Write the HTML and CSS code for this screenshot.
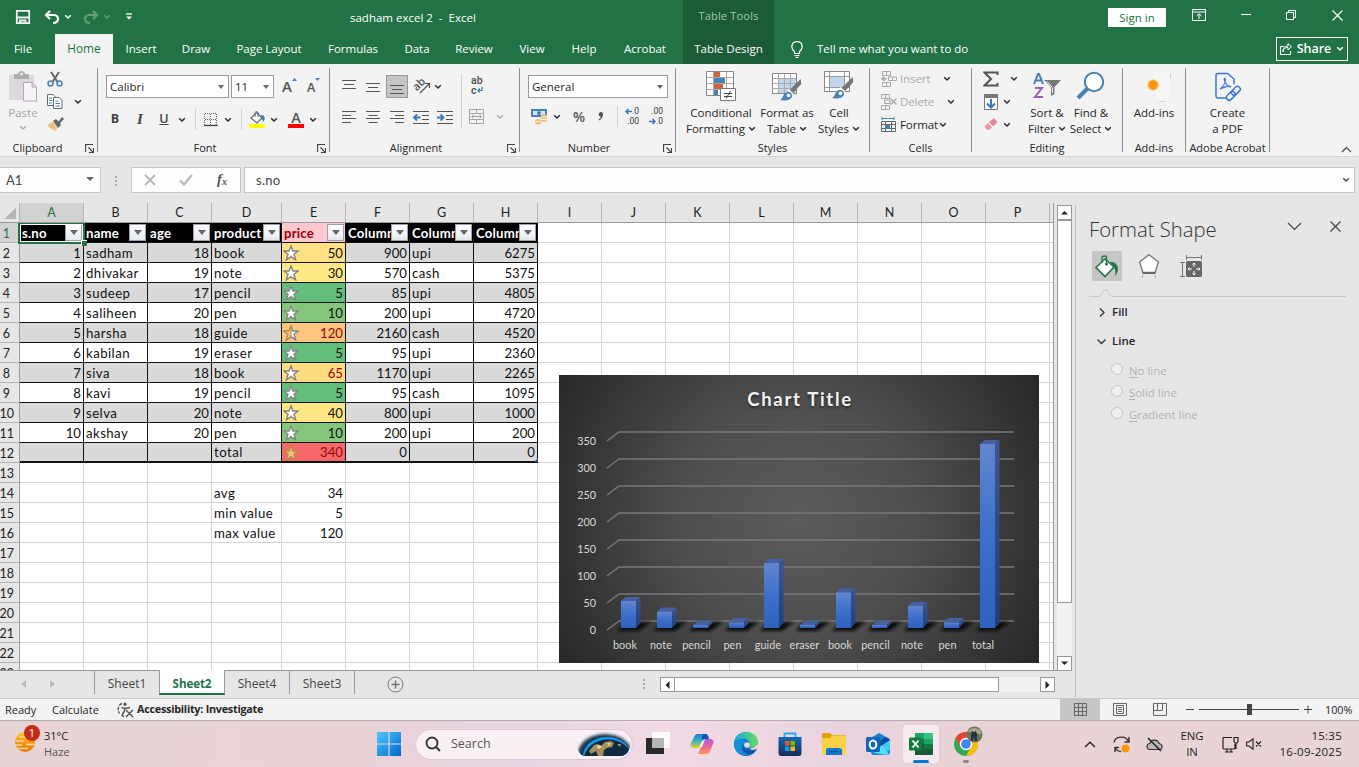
FILE: index.html
```html
<!DOCTYPE html>
<html lang="en">
<head>
<meta charset="utf-8">
<title>sadham excel 2 - Excel</title>
<link rel="stylesheet" href="styles.css">
</head>
<body>
<svg class="defs" width="0" height="0">
  <symbol id="chev" viewBox="0 0 8 6"><path d="M1.200 1.300 4 4 6.800 1.300" fill="none" stroke="currentColor" stroke-width="1.400"/></symbol>
  <symbol id="launch" viewBox="0 0 9 9"><path d="M.5 8V.5H8M3.500 3.500 8 8M8.500 4V8.500H4" fill="none" stroke="#444" stroke-width="1.200"/></symbol>
  <symbol id="star" viewBox="0 0 16 16"><path d="M8 .9 9.900 6H15.200L11 9.300 12.700 15 8 11.600 3.300 15 5 9.300.8 6H6.100Z" fill="#fff" stroke="#858585" stroke-width="1.400"/></symbol>
  <symbol id="halfstar" viewBox="0 0 16 16"><path d="M8 .9 9.900 6H15.200L11 9.300 12.700 15 8 11.600 3.300 15 5 9.300.8 6H6.100Z" fill="#fff" stroke="#858585" stroke-width="1.400"/><path d="M8 .9V11.600L3.300 15 5 9.300.8 6H6.100Z" fill="#eac282" stroke="#b98a3c"/></symbol>
  <symbol id="fullstar" viewBox="0 0 16 16"><path d="M8 .9 9.900 6H15.200L11 9.300 12.700 15 8 11.600 3.300 15 5 9.300.8 6H6.100Z" fill="#eac282" stroke="#b98a3c" stroke-width="1.400"/></symbol>
  <symbol id="brush" viewBox="0 0 24 24"><path d="M23 0 24 5 15 15 11 12Z" fill="#777"/><path d="M10 11 15 15.500" stroke="#fff" stroke-width="1.500"/><path d="M1 22C5 21 4 16 8 14 11 12.500 15 15 14 18.500 12.500 22.500 6 23 1 22Z" fill="#4682b8"/><circle cx="10.500" cy="17" r="2" fill="#fff"/></symbol>
</svg>

<header class="titlebar">
  <div class="title-left">
    <div class="quick">
      <svg width="16" height="16" viewBox="0 0 16 16" fill="none" stroke="#f3f3f3" stroke-width="1.800"><path d="M1.800 1.800H14.200V14.200H1.800ZM2 8.500H14M5 14V11.500H10.500V14"/></svg>
      <svg width="16" height="15" viewBox="0 0 16 15" fill="none" stroke="#fff" stroke-width="2.200"><path d="M6 1 2 5 6 9M2 5H10C15.500 5 15.500 13 9 13"/></svg>
      <svg width="8" height="6"><use href="#chev"/></svg>
      <svg class="faded" width="16" height="15" viewBox="0 0 16 15" fill="none" stroke="#fff" stroke-width="2.200"><path d="M10 1 14 5 10 9M14 5H6C.5 5 .5 13 7 13"/></svg>
      <svg class="faded" width="8" height="6"><use href="#chev"/></svg>
      <svg width="8" height="8" viewBox="0 0 8 8"><path d="M1 1H7" stroke="#fff" stroke-width="1.300"/><path d="M1 3.500H7L4 6.500Z" fill="#fff"/></svg>
    </div>
    <div class="doc-title">sadham excel 2&nbsp; -&nbsp; Excel</div>
  </div>
  <div class="tool-tab"><span class="tool-kind">Table Tools</span><span>Table Design</span></div>
  <div class="title-right">
    <span class="signin">Sign in</span>
    <svg width="14" height="12" viewBox="0 0 14 12" fill="none" stroke="#fff"><path d="M.5.5H13.500V11.500H.5ZM.5 3H13.500M7 10V5M4.500 7 7 4.700 9.500 7"/></svg>
    <svg width="10" height="10" viewBox="0 0 10 10"><path d="M0 4.500H10" stroke="#fff" stroke-width="1.100"/></svg>
    <svg width="10" height="10" viewBox="0 0 10 10" fill="none" stroke="#fff"><path d="M.5 2.500H7.500V9.500H.5ZM2.500 2.500V.5H9.500V7.500H7.500"/></svg>
    <svg width="11" height="11" viewBox="0 0 11 11"><path d="M.5.5 10.500 10.500M10.500.5.5 10.500" stroke="#fff" stroke-width="1.100"/></svg>
  </div>
  <nav class="tabs"><span>File</span><span class="active">Home</span><span>Insert</span><span>Draw</span><span>Page Layout</span><span>Formulas</span><span>Data</span><span>Review</span><span>View</span><span>Help</span><span>Acrobat</span></nav>
  <div class="tell">
    <svg width="12" height="17" viewBox="0 0 12 17" fill="none" stroke="#fff" stroke-width="1.200"><path d="M3.500 12.500V10.500C-1 7 .5.7 6 .7S13 7 8.500 10.500V12.500ZM3.500 14.500H8.500M4.500 16.400H7.500"/></svg>
    <span class="tell-text">Tell me what you want to do</span>
    <span class="share"><svg width="12" height="12" viewBox="0 0 12 12" fill="none" stroke="#fff"><path d="M4 3.500H.5V11.500H10.500V8M3 9C3 5.500 5 4.500 8 4.500V7L11.500 3.700 8 .7V3C4.500 3 3 5 3 9Z"/></svg>Share<svg width="8" height="6"><use href="#chev"/></svg></span>
  </div>
</header>

<section class="ribbon">
  <div class="group g-clip">
    <div class="body">
      <div class="big muted"><svg width="29" height="31" viewBox="0 0 29 31"><path d="M0 4H25V29H0Z" fill="#ddd8dc"/><path d="M5 3H9C9-1 16-1 16 3H20V8H5Z" fill="#b0adb0"/><circle cx="12.500" cy="3" r="1.300" fill="#f3f3f3"/><path d="M14.500 11.500H23L27.500 16V30H14.500ZM23 11.500V16H27.500" fill="#f8f3f8" stroke="#b0a8b2"/></svg><span>Paste</span><svg width="8" height="6"><use href="#chev"/></svg></div>
      <div class="clip-tools">
        <svg width="16" height="16" viewBox="0 0 16 16" fill="none"><path d="M4 1 10.500 11M12 1 5.500 11" stroke="#666" stroke-width="2"/><circle cx="3.500" cy="12.500" r="2.500" stroke="#4682b8" stroke-width="1.500"/><circle cx="12.500" cy="12.500" r="2.500" stroke="#4682b8" stroke-width="1.500"/></svg><i></i>
        <svg width="16" height="15" viewBox="0 0 16 15"><path d="M.5.5H6L8 2.500V11.500H.5Z" fill="#fff" stroke="#666"/><path d="M6.500 3.500H12L15 6.500V14.500H6.500Z" fill="#fff" stroke="#666"/><path d="M2 4H5M2 6.500H5M2 9H5M8.500 7H11M8.500 9.500H13M8.500 12H13" stroke="#4682b8"/></svg><svg width="8" height="6"><use href="#chev"/></svg>
        <svg width="17" height="15" viewBox="0 0 17 15"><path d="M0 8 6 5 10 11 9 14C5 13 3 11 0 8Z" fill="#ecc07c"/><path d="M6 4 9 2 11.500 4.500 15 0 17 2 13 6 14 8 11 11Z" fill="#666"/></svg>
      </div>
    </div>
    <div class="label">Clipboard<svg width="9" height="9"><use href="#launch"/></svg></div>
  </div>

  <div class="group g-font">
    <div class="body stack">
      <div class="combos"><span class="combo c-font">Calibri<b class="tri"></b></span><span class="combo c-size">11<b class="tri"></b></span>
        <span class="grow-a">A<svg width="5" height="3"><path d="M0 3 2.500 0 5 3Z" fill="#4682b8"/></svg></span><span class="shrink-a">A<svg width="5" height="3"><path d="M0 0 2.500 3 5 0Z" fill="#4682b8"/></svg></span></div>
      <div class="font-tools">
        <b class="fmt">B</b><em class="fmt it">I</em><b class="fmt un">U</b><svg width="8" height="6"><use href="#chev"/></svg><i class="vr"></i>
        <svg width="14" height="14" viewBox="0 0 14 14"><path d="M.5 1V12M6.500 1V12M12.500 1V12M1 .5H13M1 6.500H13" stroke="#666" stroke-dasharray="1 1"/><path d="M0 12.500H13.500" stroke="#444" stroke-width="1.300"/></svg><svg width="8" height="6"><use href="#chev"/></svg><i class="vr"></i>
        <svg width="17" height="17" viewBox="0 0 17 17"><path d="M2 7 8 1.500 13 7 8 12Z" fill="#fff" stroke="#666" stroke-width="1.200"/><path d="M6 6V2C6 0 9 0 9 2V6" fill="none" stroke="#666"/><path d="M12 4C16 4 16.500 7 14.500 11L12.500 8Z" fill="#4682b8"/><path d="M0 13H16V17H0Z" fill="#ff0"/></svg><svg width="8" height="6"><use href="#chev"/></svg>
        <span class="acolor">A</span><svg width="8" height="6"><use href="#chev"/></svg>
      </div>
    </div>
    <div class="label">Font<svg width="9" height="9"><use href="#launch"/></svg></div>
  </div>

  <div class="group g-align">
    <div class="body">
      <div class="align-left">
        <div class="row5 top">
          <svg width="14" height="14" viewBox="0 0 14 14"><path d="M0 .5H14M2 4.500H12M0 8.500H14" stroke="#555"/></svg>
          <svg width="14" height="14" viewBox="0 0 14 14"><path d="M0 3.500H14M2 7.500H12M0 11.500H14" stroke="#555"/></svg>
          <span class="pressed"><svg width="14" height="14" viewBox="0 0 14 14"><path d="M0 5.500H14M2 9.500H12M0 13.500H14" stroke="#555"/></svg></span>
          <span class="orient"><span>ab</span><svg width="12" height="12" viewBox="0 0 12 12"><path d="M1 11 10.500 1.500M6 1.500H10.500V6" fill="none" stroke="#555" stroke-width="1.200"/></svg></span>
          <svg width="8" height="6"><use href="#chev"/></svg>
        </div>
        <div class="row5">
          <svg width="14" height="12"><path d="M0 .5H14M0 4.500H9M0 7.500H14M0 11.500H9" stroke="#555"/></svg>
          <svg width="14" height="12"><path d="M0 .5H14M2.500 4.500H11.500M0 7.500H14M2.500 11.500H11.500" stroke="#555"/></svg>
          <svg width="14" height="12"><path d="M0 .5H14M5 4.500H14M0 7.500H14M5 11.500H14" stroke="#555"/></svg>
          <svg width="16" height="13" viewBox="0 0 16 13"><path d="M0 .5H16M9 4.500H16M9 8.500H16M0 12.500H16" stroke="#555"/><path d="M7.500 6.500H1M4 3.500 1 6.500 4 9.500" fill="none" stroke="#3a78b5" stroke-width="1.800"/></svg>
          <svg width="16" height="13" viewBox="0 0 16 13"><path d="M0 .5H16M9 4.500H16M9 8.500H16M0 12.500H16" stroke="#555"/><path d="M0 6.500H6.500M3.500 3.500 6.500 6.500 3.500 9.500" fill="none" stroke="#3a78b5" stroke-width="1.800"/></svg>
        </div>
      </div>
      <i class="vr tall"></i>
      <div class="wrapcol">
        <span class="wraptext"><span>ab</span><span>c<svg width="6" height="6" viewBox="0 0 6 6"><path d="M5 0V3.500H1M2.800 1.500 1 3.500 2.800 5.500" fill="none" stroke="#3a78b5" stroke-width="1.200"/></svg></span></span>
        <span class="merge"><svg width="15" height="15" viewBox="0 0 15 15" fill="none" stroke="#a5a5a5"><path d="M.5.5H14.500V14.500H.5ZM.5 4.500H14.500M.5 10.500H14.500M7.500.5V4M7.500 11V14.500M2.500 7.500H12.500M4.500 5.500 2.500 7.500 4.500 9.500M10.500 5.500 12.500 7.500 10.500 9.500"/></svg><svg width="8" height="6"><use href="#chev"/></svg></span>
      </div>
    </div>
    <div class="label">Alignment<svg width="9" height="9"><use href="#launch"/></svg></div>
  </div>

  <div class="group g-num">
    <div class="body stack">
      <span class="combo">General<b class="tri"></b></span>
      <div class="num-tools">
        <svg width="17" height="17" viewBox="0 0 17 17"><path d="M0 1H16V9H0Z" fill="#4682b8"/><path d="M2 3H14V7H2Z" fill="#d8e5f1"/><circle cx="8" cy="5" r="2" fill="#4682b8"/><path d="M10 7Q13 5 16 7V13Q13 15 10 13Z" fill="#ecc07c"/><path d="M4 12Q7 10 10 12V16Q7 17.500 4 16Z" fill="#ecc07c"/><path d="M10 9H16M10 11.500H16M4 13.500H10" stroke="#fff" stroke-width=".7"/></svg>
        <svg width="8" height="6"><use href="#chev"/></svg><span class="pct">%</span>
        <svg width="6" height="9" viewBox="0 0 6 9"><path d="M3 0C6 0 6 6 1 8.500L.5 7.500C2 6.500 3 5.500 2.500 4.500 0 4.500 0 0 3 0Z" fill="#555"/></svg><i class="vr"></i>
        <span class="dec"><span><svg width="7" height="7" viewBox="0 0 7 7"><path d="M7 3.500H1M3.500 1 1 3.500 3.500 6" fill="none" stroke="#3a78b5" stroke-width="1.500"/></svg>.0</span><span>.00</span></span>
        <span class="dec"><span>.00</span><span><svg width="7" height="7" viewBox="0 0 7 7"><path d="M0 3.500H6M3.500 1 6 3.500 3.500 6" fill="none" stroke="#3a78b5" stroke-width="1.500"/></svg>.0</span></span>
      </div>
    </div>
    <div class="label">Number<svg width="9" height="9"><use href="#launch"/></svg></div>
  </div>

  <div class="group g-styles">
    <div class="body">
      <div class="big"><svg width="30" height="31" viewBox="0 0 30 31"><path d="M.5.500H27.500V24.500H.5Z" fill="#fff" stroke="#888"/><path d="M8 1H14V6H8ZM8 13H17V18H8Z" fill="#d35f3f"/><path d="M8 7H19V12H8ZM8 19H12V24H8Z" fill="#4682b8"/><path d="M.5 6.500H27M.5 12.500H27M.5 18.500H27M7.500.5V24M20.500.5V24" fill="none" stroke="#aaa"/><path d="M14.500 17.500H29.500V29.500H14.500Z" fill="#fff" stroke="#777"/><path d="M18 22.500H26M18 25.500H26M24.500 20 20 27.500" stroke="#444"/></svg><span>Conditional</span><span>Formatting <svg width="8" height="6"><use href="#chev"/></svg></span></div>
      <div class="big"><svg width="30" height="31" viewBox="0 0 30 31"><path d="M.5 2.500H24.500V22.500H.5Z" fill="#fff" stroke="#888"/><path d="M7 8H24V22H7Z" fill="#c1d5eb"/><path d="M.5 7.500H24M.5 12.500H24M.5 17.500H24M6.500 3V22M12.500 3V22M18.500 3V22" stroke="#aaa"/><svg x="6" y="8" width="24" height="23" viewBox="0 0 24 24"><use href="#brush"/></svg></svg><span>Format as</span><span>Table <svg width="8" height="6"><use href="#chev"/></svg></span></div>
      <div class="big"><svg width="30" height="31" viewBox="0 0 30 31"><path d="M.5.5H25.500V20.500H.5Z" fill="#fff" stroke="#888"/><path d="M6 6H20V16H6Z" fill="#c1d5eb"/><path d="M.5 5.500H25M.5 16.500H25M5.500 1V20M20.500 1V20" stroke="#999"/><svg x="6" y="6" width="24" height="23" viewBox="0 0 24 24"><use href="#brush"/></svg></svg><span>Cell</span><span>Styles <svg width="8" height="6"><use href="#chev"/></svg></span></div>
    </div>
    <div class="label">Styles</div>
  </div>

  <div class="group g-cells">
    <div class="body">
      <div class="cellrow"><svg width="16" height="16" viewBox="0 0 16 16" fill="none" stroke="#aaa"><path d="M1.500.5H9.500V4.500H1.500ZM5.500.5V4.500M1.500 11.500H9.500V15.500H1.500ZM5.500 11.500V15.500M7.500 6H15.500V9.500H7.500ZM11.500 6V9.500"/><path d="M6 7.800H1M3.500 5.500 1 7.800 3.500 10" stroke-width="1.500"/></svg><span class="dim">Insert</span><svg class="far" width="8" height="6"><use href="#chev"/></svg></div>
      <div class="cellrow"><svg width="16" height="16" viewBox="0 0 16 16" fill="none" stroke="#aaa"><path d="M.5.5H8.500V4.500H.5ZM4.500.5V4.500M.5 11.500H8.500V15.500H.5ZM4.500 11.500V15.500M3.500 6H9V9.500H3.500Z"/><path d="M9.500 4.500 15.500 10.500M15.500 4.500 9.500 10.500" stroke-width="1.500"/></svg><span class="dim">Delete</span><svg class="far2" width="8" height="6"><use href="#chev"/></svg></div>
      <div class="cellrow"><svg width="16" height="16" viewBox="0 0 16 16" fill="none"><path d="M.5 4.500H14.500V14.500H.5ZM.5 7.500H14.500M.5 11.500H14.500M4.500 4.500V14.500M10.500 4.500V14.500" stroke="#666"/><path d="M4 8H9V12H4Z" fill="#4682b8"/><path d="M1 0V3M13 0V3M1 1.500H13" stroke="#4682b8"/></svg><span>Format</span><svg class="near" width="8" height="6"><use href="#chev"/></svg></div>
    </div>
    <div class="label">Cells</div>
  </div>

  <div class="group g-edit">
    <div class="body">
      <div class="edit-tools">
        <svg width="16" height="16" viewBox="0 0 16 16"><path d="M14.500 4V1.500H1.500L8 8 1.500 14.500H14.500V12" fill="none" stroke="#555" stroke-width="2"/></svg><svg class="shift" width="8" height="6"><use href="#chev"/></svg>
        <svg width="14" height="16" viewBox="0 0 14 16"><path d="M.5.5H13.500V15.500H.5Z" fill="#fff" stroke="#777"/><path d="M0 0H14V4H0Z" fill="#777"/><path d="M7 5V13M3 9.500 7 13.500 11 9.500" fill="none" stroke="#3a78b5" stroke-width="2"/></svg><svg width="8" height="6"><use href="#chev"/></svg>
        <svg width="14" height="13" viewBox="0 0 14 13"><path d="M5 4 10 0 13.500 4 9 8.500Z" fill="#e8879b"/><path d="M4 5 8 9.500 5 12H3L.5 8.500Z" fill="#ee9aab"/></svg><svg width="8" height="6"><use href="#chev"/></svg>
      </div>
      <div class="big sort"><svg width="30" height="31" viewBox="0 0 30 31"><path d="M2 13 6 3H7L11 13M3.500 9.500H9.500" fill="none" stroke="#4682b8" stroke-width="2"/><path d="M3 17H10L3 26H11" fill="none" stroke="#9a5fb8" stroke-width="2"/><path d="M12 9H29L22.500 16V23L19 25V16Z" fill="#777"/><path d="M15 10.500 20.500 16.500V22" fill="none" stroke="#fff"/></svg><span>Sort &amp;</span><span>Filter <svg width="8" height="6"><use href="#chev"/></svg></span></div>
      <div class="big find"><svg width="30" height="31" viewBox="0 0 30 31"><path d="M2 27 12 17" stroke="#4682b8" stroke-width="4"/><circle cx="18" cy="11" r="9.200" fill="#fff" stroke="#4682b8" stroke-width="2"/></svg><span>Find &amp;</span><span>Select <svg width="8" height="6"><use href="#chev"/></svg></span></div>
    </div>
    <div class="label">Editing</div>
  </div>

  <div class="group g-add">
    <div class="body"><div class="big"><svg width="34" height="31" viewBox="0 0 34 31"><path d="M17 1H33V30H20" fill="#f6f6f6"/><path d="M33.500 3V8M22 30.500H29" stroke="#c5d5e2"/><circle cx="16" cy="14" r="6" fill="#ffd596"/><circle cx="16" cy="14" r="4.700" fill="#ff950a"/></svg><span>Add-ins</span></div></div>
    <div class="label">Add-ins</div>
  </div>

  <div class="group g-pdf">
    <div class="body"><div class="big"><svg width="28" height="31" viewBox="0 0 28 31" fill="none" stroke="#3f75d6" stroke-width="1.500"><path d="M13 27H4Q2 27 2 25V4.500Q2 2.500 4 2.500H13.500L20 8V13"/><path d="M6 18C11 15 12 9 11 7 9 7 11 14 16 16 18 15 15 14 6 18" stroke-width="1.100"/><rect x="12" y="22" width="10" height="5.500" rx="2.700" transform="rotate(-45 17 25)"/><rect x="17" y="17" width="10" height="5.500" rx="2.700" transform="rotate(-45 22 20)"/></svg><span>Create</span><span>a PDF</span></div></div>
    <div class="label">Adobe Acrobat</div>
  </div>
  <svg class="collapse" width="11" height="7" viewBox="0 0 11 7"><path d="M1 6 5.500 1.500 10 6" fill="none" stroke="#555" stroke-width="1.300"/></svg>
</section>

<section class="formula">
  <div class="namebox">A1<b class="tri"></b></div>
  <svg class="grip" width="3" height="11"><path d="M0 0H2V2H0ZM0 4H2V6H0ZM0 8H2V10H0Z" fill="#aaa"/></svg>
  <div class="fx-tools">
    <svg width="12" height="12" viewBox="0 0 12 12"><path d="M1 1 11 11M11 1 1 11" stroke="#b8b8b8" stroke-width="1.800"/></svg>
    <svg width="14" height="12" viewBox="0 0 14 12"><path d="M1 6.500 5 10.500 13 1" fill="none" stroke="#b8b8b8" stroke-width="2.200"/></svg>
    <span class="fx">f<sub>x</sub></span>
  </div>
  <div class="fx-input">s.no<svg width="8" height="6"><use href="#chev"/></svg></div>
</section>

<main class="work">
  <div class="sheet">
    <div class="colhead"><i class="corner"></i><span class="sel">A</span><span>B</span><span>C</span><span class="w70">D</span><span>E</span><span>F</span><span>G</span><span>H</span><span>I</span><span>J</span><span>K</span><span>L</span><span>M</span><span>N</span><span>O</span><span>P</span></div>
    <div class="gridarea">
      <div class="rowhead"><span class="sel">1</span><span>2</span><span>3</span><span>4</span><span>5</span><span>6</span><span>7</span><span>8</span><span>9</span><span>10</span><span>11</span><span>12</span><span>13</span><span>14</span><span>15</span><span>16</span><span>17</span><span>18</span><span>19</span><span>20</span><span>21</span><span>22</span><span>23</span></div>
      <div class="cells">
        <table>
          <colgroup><col><col><col><col class="wide"><col><col><col><col></colgroup>
          <thead><tr><th><div>s.no<i></i></div></th><th><div>name<i></i></div></th><th><div>age<i></i></div></th><th><div>product<i></i></div></th><th class="pink"><div>price<i></i></div></th><th><div>Column1<i></i></div></th><th><div>Column2<i></i></div></th><th><div>Column3<i></i></div></th></tr></thead>
          <tbody>
          <tr><td>1</td><td>sadham</td><td>18</td><td>book</td><td class="p50"><svg><use href="#star"/></svg>50</td><td>900</td><td>upi</td><td>6275</td></tr>
          <tr><td>2</td><td>dhivakar</td><td>19</td><td>note</td><td class="p30"><svg><use href="#star"/></svg>30</td><td>570</td><td>cash</td><td>5375</td></tr>
          <tr><td>3</td><td>sudeep</td><td>17</td><td>pencil</td><td class="p5"><svg><use href="#star"/></svg>5</td><td>85</td><td>upi</td><td>4805</td></tr>
          <tr><td>4</td><td>saliheen</td><td>20</td><td>pen</td><td class="p10"><svg><use href="#star"/></svg>10</td><td>200</td><td>upi</td><td>4720</td></tr>
          <tr><td>5</td><td>harsha</td><td>18</td><td>guide</td><td class="p120 high"><svg><use href="#halfstar"/></svg>120</td><td>2160</td><td>cash</td><td>4520</td></tr>
          <tr><td>6</td><td>kabilan</td><td>19</td><td>eraser</td><td class="p5"><svg><use href="#star"/></svg>5</td><td>95</td><td>upi</td><td>2360</td></tr>
          <tr><td>7</td><td>siva</td><td>18</td><td>book</td><td class="p65 high"><svg><use href="#star"/></svg>65</td><td>1170</td><td>upi</td><td>2265</td></tr>
          <tr><td>8</td><td>kavi</td><td>19</td><td>pencil</td><td class="p5"><svg><use href="#star"/></svg>5</td><td>95</td><td>cash</td><td>1095</td></tr>
          <tr><td>9</td><td>selva</td><td>20</td><td>note</td><td class="p40"><svg><use href="#star"/></svg>40</td><td>800</td><td>upi</td><td>1000</td></tr>
          <tr><td>10</td><td>akshay</td><td>20</td><td>pen</td><td class="p10"><svg><use href="#star"/></svg>10</td><td>200</td><td>upi</td><td>200</td></tr>
          <tr class="last"><td></td><td></td><td></td><td>total</td><td class="p340 high"><svg><use href="#fullstar"/></svg>340</td><td>0</td><td></td><td>0</td></tr>
          </tbody>
          <tbody class="plain">
          <tr><td colspan="8"></td></tr>
          <tr><td colspan="3"></td><td>avg</td><td>34</td><td colspan="3"></td></tr>
          <tr><td colspan="3"></td><td>min value</td><td>5</td><td colspan="3"></td></tr>
          <tr><td colspan="3"></td><td>max value</td><td>120</td><td colspan="3"></td></tr>
          </tbody>
        </table>
        <div class="selection"></div>
        <i class="table-corner"></i>
        <svg class="chart" width="480" height="288" viewBox="0 0 480 288">
          <defs>
            <radialGradient id="bg" gradientUnits="userSpaceOnUse" cx="240" cy="144" r="285"><stop offset="0" stop-color="#5a5a5a"/><stop offset=".4" stop-color="#4f4f4f"/><stop offset="1" stop-color="#262626"/></radialGradient>
            <linearGradient id="face" x1="0" y1="0" x2="0" y2="1"><stop offset="0" stop-color="#6385d0"/><stop offset=".5" stop-color="#3d6fcb"/><stop offset="1" stop-color="#2f62bb"/></linearGradient>
            <linearGradient id="side" x1="0" y1="0" x2="0" y2="1"><stop offset="0" stop-color="#3c5690"/><stop offset="1" stop-color="#1f3f7c"/></linearGradient>
            <filter id="soft" x="-.3" y="-1" width="1.600" height="3"><feGaussianBlur stdDeviation="1.500"/></filter>
            <g id="shadow"><path d="M-4 256 4 247H30L18 256Z" fill="#111" filter="url(#soft)"/></g>
          </defs>
          <rect width="480" height="288" fill="url(#bg)"/>
          <text class="ctitle" x="241" y="31">Chart Title</text>
          <path d="M48 66 60 57H455M48 93 60 84H455M48 120 60 111H455M48 147 60 138H455M48 174 60 165H455M48 201 60 192H455M48 228 60 219H455M48 255 60 246H455" fill="none" stroke="#787878" stroke-width="1.500"/>
          <g class="axis"><text x="37" y="70">350</text><text x="37" y="97">300</text><text x="37" y="124">250</text><text x="37" y="151">200</text><text x="37" y="178">150</text><text x="37" y="205">100</text><text x="37" y="232">50</text><text x="37" y="259">0</text></g>
          <g><use href="#shadow" x="62"/><use href="#shadow" x="98"/><use href="#shadow" x="134"/><use href="#shadow" x="170"/><use href="#shadow" x="205"/><use href="#shadow" x="241"/><use href="#shadow" x="277"/><use href="#shadow" x="313"/><use href="#shadow" x="349"/><use href="#shadow" x="385"/><use href="#shadow" x="421"/></g>
          <g fill="#45619f"><path d="M62 226 66.500 222H81.500L77 226ZM98 236.500 102.500 232.500H117.500L113 236.500ZM134 250 138.500 246H153.500L149 250ZM170 247 174.500 243H189.500L185 247ZM205 188 209.500 184H224.500L220 188ZM241 250 245.500 246H260.500L256 250ZM277 217.500 281.500 213.500H296.500L292 217.500ZM313 250 317.500 246H332.500L328 250ZM349 231 353.500 227H368.500L364 231ZM385 247 389.500 243H404.500L400 247ZM421 69 425.500 65H440.500L436 69Z"/></g>
          <g fill="url(#side)"><path d="M77 226 81.500 222V248L77 253Z"/><path d="M113 236.500 117.500 232.500V248L113 253Z"/><path d="M149 250 153.500 246V248L149 253Z"/><path d="M185 247 189.500 243V248L185 253Z"/><path d="M220 188 224.500 184V248L220 253Z"/><path d="M256 250 260.500 246V248L256 253Z"/><path d="M292 217.500 296.500 213.500V248L292 253Z"/><path d="M328 250 332.500 246V248L328 253Z"/><path d="M364 231 368.500 227V248L364 253Z"/><path d="M400 247 404.500 243V248L400 253Z"/><path d="M436 69 440.500 65V248L436 253Z"/></g>
          <g fill="url(#face)"><rect x="62" y="226" width="15" height="27"/><rect x="98" y="236.500" width="15" height="16.500"/><rect x="134" y="250" width="15" height="3"/><rect x="170" y="247.300" width="15" height="5.700"/><rect x="205" y="188" width="15" height="65"/><rect x="241" y="250" width="15" height="3"/><rect x="277" y="217.500" width="15" height="35.500"/><rect x="313" y="250" width="15" height="3"/><rect x="349" y="231" width="15" height="22"/><rect x="385" y="247.300" width="15" height="5.700"/><rect x="421" y="69" width="15" height="184"/></g>
          <g class="cats"><text x="66" y="274">book</text><text x="102" y="274">note</text><text x="137.500" y="274">pencil</text><text x="173.500" y="274">pen</text><text x="209" y="274">guide</text><text x="245.500" y="274">eraser</text><text x="281" y="274">book</text><text x="316.500" y="274">pencil</text><text x="353" y="274">note</text><text x="388.500" y="274">pen</text><text x="424" y="274">total</text></g>
        </svg>
      </div>
    </div>
  </div>
  <div class="vscroll"><span><svg width="9" height="5"><path d="M1 4.500 4.500 1 8 4.500Z" fill="#222"/></svg></span><i></i><span><svg width="9" height="5"><path d="M1 .5 4.500 4 8 .5Z" fill="#222"/></svg></span></div>
  <aside class="pane">
    <div class="pane-head"><h2>Format Shape</h2><svg width="15" height="9" viewBox="0 0 15 9"><path d="M1 1 7.500 7.500 14 1" fill="none" stroke="#444" stroke-width="1.200"/></svg><svg width="11" height="11" viewBox="0 0 11 11"><path d="M.5.5 10.500 10.500M10.500.5.5 10.500" stroke="#444" stroke-width="1.200"/></svg></div>
    <div class="pane-icons">
      <span class="on"><svg width="24" height="23" viewBox="0 0 24 23"><path d="M1 12.500 10 4 19 12 10 21.500Z" fill="#fff" stroke="#217346" stroke-width="1.600"/><path d="M7 8V2.500C7 .5 11.500.5 11.500 2.500V8" fill="none" stroke="#217346" stroke-width="1.300"/><circle cx="11.500" cy="9" r="1.500" fill="#217346"/><path d="M15 7C22 6 26 14 20 21 21 16 20 14 19 12Z" fill="#217346"/></svg></span>
      <span><svg width="22" height="24" viewBox="0 0 22 24"><path d="M11 .7 20.500 8 17 18.500H5L1.500 8Z" fill="#fff" stroke="#777" stroke-width="1.300"/><path d="M4.500 19H17.500" stroke="#666" stroke-width="2"/><path d="M5 21 4 24M17 21 18 24" stroke="#aaa"/></svg></span>
      <span><svg width="22" height="22" viewBox="0 0 22 22"><rect x="6" y="6" width="16" height="16" rx="1.500" fill="#666"/><path d="M14 8V12M14 16V20M8 14H12M16 14H20M12.500 9.500 14 8 15.500 9.500M12.500 18.500 14 20 15.500 18.500M9.500 12.500 8 14 9.500 15.500M18.500 12.500 20 14 18.500 15.500" fill="none" stroke="#fff"/><path d="M6.500 0V5M21.500 0V5M7 2.500H21M0 7.500H5M0 21.500H5M2.500 7.500V21.500" stroke="#777"/></svg></span>
    </div>
    <svg class="notch" width="258" height="10" viewBox="0 0 258 10"><path d="M0 8.500H10.500L16.500 1 22.500 8.500H257" fill="none" stroke="#c6c6c6"/></svg>
    <div class="fold"><svg width="9" height="9" viewBox="0 0 9 9"><path d="M3 .5 7 4.500 3 8.500" fill="none" stroke="#333" stroke-width="1.300"/></svg>Fill</div>
    <div class="fold line"><svg width="9" height="9" viewBox="0 0 9 9"><path d="M.5 2.500 4.500 6.500 8.500 2.500" fill="none" stroke="#333" stroke-width="1.300"/></svg>Line</div>
    <div class="opt"><i></i><span><u>N</u>o line</span></div>
    <div class="opt"><i></i><span><u>S</u>olid line</span></div>
    <div class="opt"><i></i><span><u>G</u>radient line</span></div>
  </aside>
</main>

<section class="sheetbar">
  <div class="arrows"><svg width="5" height="8"><path d="M5 0V8L0 4Z" fill="#bbb"/></svg><svg width="5" height="8"><path d="M0 0V8L5 4Z" fill="#bbb"/></svg></div>
  <span class="stab">Sheet1</span><span class="stab current">Sheet2</span><span class="stab">Sheet4</span><span class="stab">Sheet3</span>
  <svg class="plus" width="17" height="17" viewBox="0 0 17 17" fill="none" stroke="#777"><circle cx="8.500" cy="8.500" r="7.500"/><path d="M4.500 8.500H12.500M8.500 4.500V12.500" stroke-width="1.500"/></svg>
  <svg class="grip" width="3" height="11"><path d="M0 0H2V2H0ZM0 4H2V6H0ZM0 8H2V10H0Z" fill="#aaa"/></svg>
  <div class="hscroll"><span><svg width="5" height="8"><path d="M4.500 0V8L.5 4Z" fill="#222"/></svg></span><i></i><span><svg width="5" height="8"><path d="M.5 0V8L4.500 4Z" fill="#222"/></svg></span></div>
</section>

<footer class="status">
  <span class="ready">Ready</span><span class="calc">Calculate</span>
  <svg width="17" height="16" viewBox="0 0 17 16" fill="none" stroke="#555"><path d="M5 1.500C1 3 0 8 2.500 11.500M4.500 13.500 7 14.500" stroke-width="1.400" stroke-dasharray="3.500 1.200"/><circle cx="8" cy="2.200" r="1.200" fill="#555"/><path d="M4.500 5.500 8 6.500 13 5.500M8 6.500 7 10 5 13M9 8 16 15M16 8 9 15" stroke-width="1.500"/></svg>
  <b class="acc">Accessibility: Investigate</b>
  <div class="views">
    <span class="on"><svg width="13" height="13" fill="none" stroke="#666"><path d="M.5.5H12.500V12.500H.5ZM.5 4.500H12.500M.5 8.500H12.500M4.500.5V12.500M8.500.5V12.500"/></svg></span>
    <span><svg width="14" height="13" fill="none" stroke="#666"><path d="M.5.5H13.500V12.500H.5ZM3.500 2.500H10.500V10.500H3.500ZM5 4.500H9M5 6.500H9M5 8.500H9"/></svg></span>
    <span><svg width="14" height="13" fill="none" stroke="#666"><path d="M.5.5H13.500V12.500H.5ZM.5 7.500H9.500V.5M4.500.5V7.500"/></svg></span>
  </div>
  <svg class="zoom" width="124" height="11" viewBox="0 0 124 11"><path d="M1 5.500H9M14 5.500H114M119 5.500H127M123 1.500V9.500" stroke="#444" fill="none"/><path d="M62 0H67V11H62Z" fill="#444"/></svg>
  <span class="pc">100%</span>
</footer>

<section class="taskbar">
  <div class="weather"><svg width="28" height="31" viewBox="0 0 28 31"><defs><linearGradient id="sun" x1="0" y1="0" x2="0" y2="1"><stop offset="0" stop-color="#ffc91f"/><stop offset="1" stop-color="#e96f0c"/></linearGradient></defs><circle cx="12" cy="17" r="10" fill="url(#sun)"/><path d="M6 12H13M3 16H11M13 19.500H22M1 20H9M2 23.500H15" stroke="#ecd9a4" stroke-width="1.500"/><circle cx="19" cy="8" r="8" fill="#c42b1c"/><text x="19" y="12">1</text></svg><div>31°C<br><span>Haze</span></div></div>
  <div class="apps">
    <svg class="win" width="24" height="24" viewBox="0 0 24 24"><defs><linearGradient id="w" x1="0" y1="0" x2="1" y2="1"><stop offset="0" stop-color="#4cc9fa"/><stop offset="1" stop-color="#0067cf"/></linearGradient></defs><path d="M0 0H11.400V11.400H0ZM12.600 0H24V11.400H12.600ZM0 12.600H11.400V24H0ZM12.600 12.600H24V24H12.600Z" fill="url(#w)"/></svg>
    <div class="search"><svg width="17" height="17" viewBox="0 0 17 17" fill="none" stroke="#333" stroke-width="1.900"><circle cx="7" cy="7" r="5.500"/><path d="M11 11 15 15"/></svg>Search
      <svg class="earth" width="54" height="26" viewBox="0 0 54 26"><defs><clipPath id="pill"><path d="M0 0H54V13Q51 25 44 25H6Q1 22 0 16Z"/></clipPath><filter id="glow"><feGaussianBlur stdDeviation="1.500"/></filter></defs><g clip-path="url(#pill)"><ellipse cx="28" cy="23" rx="27" ry="20" fill="#15364c" filter="url(#glow)"/><ellipse cx="30" cy="25" rx="24" ry="19" fill="#159af2"/><ellipse cx="31" cy="28" rx="24" ry="19.500" fill="#11293f"/><path d="M12 20 17 14 21 13 24 15 28 11 34 10 37 12 35 16 30 17 27 19 26 25H21L19 20 14 23ZM40 13 44 13 43 16Z" fill="#a58f5f"/><path d="M19 15 23 14 25 16 22 18ZM30 12 34 12 32 15Z" fill="#ecd38b"/></g></svg></div>
    <svg class="app" width="24" height="24" viewBox="0 0 24 24"><path d="M0 6H18V22H0Z" fill="#292929"/><path d="M6 0H24V16H6Z" fill="#fff" opacity=".85"/><path d="M6 6H18V16H6Z" fill="#aaa" opacity=".8"/></svg>
    <svg class="app" width="24" height="24" viewBox="0 0 24 24"><defs><linearGradient id="ca" x1="0" y1="0" x2="0" y2="1"><stop offset="0" stop-color="#197fd5"/><stop offset=".5" stop-color="#36b7c0"/><stop offset="1" stop-color="#e7d41c"/></linearGradient><linearGradient id="cb" x1="0" y1="0" x2="0" y2="1"><stop offset="0" stop-color="#a560e0"/><stop offset=".5" stop-color="#ef5f9a"/><stop offset="1" stop-color="#ff9a51"/></linearGradient></defs><path d="M8 2H17L12 16H3Q-1 15 1 11L4 5Q5 2 8 2Z" fill="url(#ca)"/><path d="M13 2H16Q18 2 19 7H14Q12 7 11 11Z" fill="#1750b5"/><path d="M14 7H21Q25 8 23 12L20 19Q19 22 16 22H8L13 10Z" fill="url(#cb)"/><path d="M12 9 15 7 12 15 9 16Z" fill="#f6edf3"/></svg>
    <svg class="app" width="24" height="24" viewBox="0 0 24 24"><defs><linearGradient id="ea" x1="0" y1="0" x2="1" y2="0"><stop offset="0" stop-color="#1aa5e8"/><stop offset="1" stop-color="#60df57"/></linearGradient></defs><circle cx="12" cy="12" r="12" fill="#0c69bd"/><path d="M0 12C0-3 23-4 24 10 24 16 16 17 15 15 17 10 13 6 8 7 4 7 1 9 0 12Z" fill="url(#ea)"/><path d="M0 12C2 6 12 6 14 10 8 9 8 20 18 21 8 27 0 20 0 12Z" fill="#148edb"/><path d="M10 12C8 18 15 21 22 17 19 22 14 24 10 20 7 18 8 13 10 12Z" fill="#1152a0"/><circle cx="13" cy="13" r="2.800" fill="#f0d8e2"/><path d="M13 15C15 18 21 16 24 12V17L18 18Z" fill="#ecd4df"/></svg>
    <svg class="app" width="24" height="24" viewBox="0 0 24 24"><defs><linearGradient id="st" x1="0" y1="0" x2="0" y2="1"><stop offset="0" stop-color="#1467b5"/><stop offset="1" stop-color="#172d58"/></linearGradient></defs><path d="M6.500 6V1.500H17.500V6" fill="none" stroke="#22a7ee" stroke-width="1.800"/><path d="M.5 5H23.500V21Q23.500 24 20.500 24H3.500Q.5 24 .5 21Z" fill="url(#st)"/><path d="M7 9H11.500V13.500H7Z" fill="#f15221"/><path d="M12.500 9H17V13.500H12.500Z" fill="#7fb900"/><path d="M7 14.500H11.500V19H7Z" fill="#00a1eb"/><path d="M12.500 14.500H17V19H12.500Z" fill="#fdb900"/></svg>
    <svg class="app" width="24" height="24" viewBox="0 0 24 24"><path d="M0 2Q0 1 1 1H8L10 3H23Q24 3 24 4V9H0Z" fill="#e0a10b"/><path d="M0 6H8L10 3.500H23Q24 4 24 5V21Q24 23 22 23H2Q0 23 0 21Z" fill="#fbd044"/><path d="M4 23V18Q4 16 6 16H17Q20 16 20 18V23Z" fill="#1178d0"/><path d="M7 19H16V20.500H7Z" fill="#0758a0"/></svg>
    <svg class="app" width="24" height="24" viewBox="0 0 24 24"><path d="M3 7 13 1 24 7V20Q24 23 21 23H8Q5 23 5 20Z" fill="#1683d2"/><path d="M15 11 24 7V18L17 22Z" fill="#41caf0"/><path d="M12 10 20 5 24 8 15 14Z" fill="#124aa0"/><path d="M8 21 16 13 23 22 20 23Z" fill="#59dcfa"/><rect y="5" width="14" height="15" rx="1.500" fill="#0f67bd"/><ellipse cx="7" cy="12.500" rx="3.300" ry="4" fill="none" stroke="#fff" stroke-width="2"/></svg>
    <span class="running"><svg width="24" height="24" viewBox="0 0 24 24"><path d="M6 2Q6 1 7 1H24V22Q24 23 23 23H6Z" fill="#185c37"/><path d="M6 1H15V7H6Z" fill="#21a366"/><path d="M15 1H24V7H15Z" fill="#33c481"/><path d="M6 7H15V12H6Z" fill="#107c41"/><path d="M15 7H24V12H15Z" fill="#21a366"/><path d="M15 12H24V17H15Z" fill="#107c41"/><rect y="5.500" width="13" height="13" rx="1.500" fill="#107c41"/><path d="M3.500 8.500 9.500 15.500M9.500 8.500 3.500 15.500" stroke="#fff" stroke-width="1.900"/></svg></span>
    <span class="chrome"><svg width="30" height="30" viewBox="0 0 30 30"><circle cx="13" cy="18" r="12" fill="#35a853"/><path d="M2.600 12A12 12 0 0 1 23.400 12H13L8 21Z" fill="#e94134"/><path d="M13 12H23.500A12 12 0 0 1 13 30L18.500 20Z" fill="#fdbe05"/><circle cx="13" cy="18" r="6.200" fill="#fff"/><circle cx="13" cy="18" r="4.800" fill="#4285f4"/><circle cx="21.500" cy="8.500" r="8" fill="#69745a"/><path d="M14 6Q20-1 28 4V9Q20 5 14 6Z" fill="#a9a386"/><path d="M20 4H22L24 8V15H22L21 10 20 15H18V8Z" fill="#243344"/><circle cx="21" cy="4.500" r="1.300" fill="#d9b18d"/></svg></span>
  </div>
  <div class="tray">
    <svg class="up" width="12" height="7" viewBox="0 0 12 7"><path d="M1 6 6 1.200 11 6" fill="none" stroke="#222" stroke-width="1.400"/></svg>
    <svg class="sync" width="18" height="17" viewBox="0 0 18 17" fill="none" stroke="#333" stroke-width="1.400"><path d="M1 6.500C2 0 13-1 15.500 5.500M16 1V6H11.500M2 16V11.500H6M2 11.500C3.500 14.500 6 15.500 8 15.500"/><circle cx="12.500" cy="12.500" r="4" fill="#ff950a" stroke="none"/></svg>
    <svg class="cloud" width="17" height="15" viewBox="0 0 17 15"><path d="M4 12.500C-.5 12.500.500 6.500 4 6.500 4.500 2 12 2 13 6.500 17 7 17 12.500 13.500 12.500Z" fill="#bbb" stroke="#333" stroke-width="1.200"/><path d="M2 1 15 14" stroke="#222" stroke-width="1.500"/></svg>
    <div class="lang">ENG<br>IN</div>
    <svg class="net" width="17" height="17" viewBox="0 0 17 17" fill="none" stroke="#222" stroke-width="1.200"><path d="M10 1.500H2Q1 1.500 1 2.500V12Q1 13 2 13H12Q13 13 13 12V8M3 16H11M5 13V16M9 13V16M12 1.500H16V5.500L15 7H13L12 5.500ZM14 7V13"/></svg>
    <svg class="vol" width="16" height="12" viewBox="0 0 16 12" fill="none" stroke="#222" stroke-width="1.100"><path d="M.7 4H3L7 .800V11.200L3 8H.7ZM10 3.500 15 8.500M15 3.500 10 8.500"/></svg>
    <div class="clock">15:35<br>16-09-2025</div>
  </div>
</section>
</body>
</html>
```

FILE: styles.css
```css
* { box-sizing: border-box; }
body { margin: 0; width: 1359px; height: 767px; overflow: hidden; font: 11.5px/16px "Open Sans", "Noto Sans", sans-serif; color: #262626; background: #e6e6e6; display: flex; flex-direction: column; }
svg { flex: none; display: block; }
.defs { position: absolute; }
i { font-style: normal; flex: none; }

/* title bar and ribbon tabs */
.titlebar { height: 64px; flex: none; background: #217346; color: #fff; display: grid; grid-template-columns: 683px 91px 1fr; grid-template-rows: 34px 30px; }
.title-left { display: flex; align-items: center; }
.quick { display: grid; grid-template-columns: 46px 12px 20px 26px 6px 38px; justify-items: center; align-items: center; width: 148px; flex: none; }
.faded { opacity: .3; }
.doc-title { width: 154px; margin-left: 189px; padding-left: 13px; padding-top: 2px; white-space: nowrap; }
.tool-tab { grid-column: 2; grid-row: 1 / 3; background: #1b5b38; display: flex; flex-direction: column; align-items: center; padding-top: 8px; gap: 17px; white-space: nowrap; }
.tool-kind { color: #a0c9ae; font-size: 11px; letter-spacing: .2px; }
.title-right { grid-column: 3; display: flex; align-items: center; padding: 0 16px 4px 0; justify-content: flex-end; }
.signin { background: #fff; color: #217346; width: 58px; height: 19px; line-height: 19px; text-align: center; margin: 4px 26px 0 0; }
.title-right svg + svg { margin-left: 35px; }
.title-right svg:last-child { margin-left: 36px; }
.tabs { grid-column: 1; grid-row: 2; display: grid; grid-template-columns: 46px 76px 47px 54px 92px 76px 52px 62px 54px 50px 72px; justify-items: center; line-height: 29px; white-space: nowrap; }
.tabs .active { background: #f3f3f3; color: #217346; width: 58px; text-align: center; font-size: 11.8px; }
.tabs span:nth-child(3) { margin-left: -9px; }
.tell { grid-column: 3; grid-row: 2; display: flex; align-items: center; padding-left: 17px; }
.tell-text { margin-left: 14px; width: 459px; white-space: nowrap; }
.share { width: 72px; height: 24px; border: 1px solid #fff; display: flex; align-items: center; justify-content: center; gap: 5px; font-size: 12.5px; font-weight: 600; margin-top: 0; }

/* ribbon */
.ribbon { height: 93px; flex: none; background: #f3f3f3; border-bottom: 1px solid #d2d2d2; display: flex; padding-top: 4px; white-space: nowrap; }
.group { height: 84px; border-right: 1px solid #8f8f8f; display: flex; flex-direction: column; }
.g-clip { width: 98px; } .g-font { width: 232px; } .g-align { width: 190px; } .g-num { width: 156px; } .g-styles { width: 194px; }
.g-cells { width: 102px; } .g-edit { width: 151px; } .g-add { width: 63px; } .g-pdf { width: 84px; }
.body { height: 72px; flex: none; display: flex; }
.body.stack { flex-direction: column; padding: 7px 0 0 8px; }
.label { height: 16px; flex: none; display: flex; justify-content: center; font-size: 11px; align-items: center; position: relative; }
.label svg { position: absolute; right: 3px; top: 4px; }
.g-clip .label { padding-right: 22px; }
.g-font .label, .g-align .label, .g-num .label { padding-right: 17px; }
.big { display: flex; flex-direction: column; align-items: center; padding-top: 3px; }
.big > svg { margin-bottom: 3px; }
.big span svg { display: inline-block; vertical-align: 1px; }
.muted { color: #a6a6a6; width: 46px; }
.muted > svg:last-child { margin-top: 4px; }
.clip-tools { display: grid; grid-template-columns: 18px 28px; grid-template-rows: 23px 23px 23px; justify-items: center; align-items: center; margin-top: -1px; }
.combo { border: 1px solid #999; background: #fff; height: 23px; line-height: 21px; padding-left: 3px; display: block; position: relative; }
.tri { position: absolute; right: 4px; top: 9px; border: 3px solid transparent; border-top: 4px solid #666; border-bottom: 0; }
.combos { display: flex; gap: 2px; }
.c-font { width: 123px; } .c-size { width: 43px; }
.grow-a, .shrink-a { color: #555; font-weight: 600; display: flex; align-items: flex-start; }
.grow-a { font-size: 15px; line-height: 23px; margin-left: 6px; }
.shrink-a { font-size: 12.5px; line-height: 25px; margin-left: 8px; }
.grow-a svg, .shrink-a svg { margin-top: 3px; }
.font-tools { display: grid; grid-template-columns: 18px 32px 16px 20px 7px 23px 12px 14px 18px 16px 28px 6px; justify-items: center; align-items: center; margin-top: 9px; height: 20px; flex: none; }
.fmt { font-size: 12.5px; color: #444; line-height: 14px; margin-top: -2px; }
.it { font-family: "Liberation Serif", serif; font-weight: bold; font-size: 15px; }
.un { text-decoration: underline; font-weight: 600; }
.vr { width: 1px; height: 21px; background: #d0d0d0; }
.tall { height: 55px; margin: 6px 6px 0 4px; }
.acolor { width: 16px; border-bottom: 4px solid red; text-align: center; font-size: 14.5px; line-height: 13px; font-weight: 600; color: #555; height: 17px; }
.align-left { width: 127px; padding: 7px 0 0 7px; }
.row5 { display: grid; grid-template-columns: repeat(5, 24px); justify-items: center; align-items: center; height: 20px; margin-top: 9px; }
.row5.top { height: 23px; margin-top: 0; grid-template-columns: 24px 24px 24px 26px 6px; }
.pressed { width: 22px; height: 23px; border: 1px solid #999; background: #c5c5c5; display: flex; align-items: center; justify-content: center; }
.orient { display: flex; align-items: center; font-size: 11px; color: #555; font-weight: 600; position: relative; width: 17px; height: 16px; }
.orient span { transform: rotate(-45deg); margin-top: -5px; margin-left: -2px; }
.orient svg { position: absolute; right: 0; top: 3px; }
.wrapcol { padding-top: 8px; width: 44px; }
.wraptext { display: block; width: 18px; font: 600 11px/9.5px Roboto, sans-serif; color: #555; padding: 0 0 0 3px; height: 30px; }
.wraptext span { display: flex; gap: 1px; align-items: center; height: 9.5px; }
.wraptext span { font-size: 10.500px; }
.merge { display: flex; align-items: center; gap: 12px; color: #aaa; padding-left: 1px; padding-top: 3px; }
.g-num .combo { width: 140px; }
.num-tools { display: grid; grid-template-columns: 22px 14px 30px 14px 18px 12px 36px; justify-items: center; align-items: center; margin-top: 8px; height: 20px; }
.pct { font-size: 14px; color: #555; font-weight: 600; }
.dec { font: 8.5px/9.5px Roboto, sans-serif; color: #333; display: flex; flex-direction: column; align-items: flex-end; }
.dec span { display: flex; align-items: center; }
.g-styles .body { padding-left: 10px; }
.g-styles .big:nth-child(1) { width: 70px; } .g-styles .big:nth-child(2) { width: 62px; } .g-styles .big:nth-child(3) { width: 42px; }
.g-cells .body { flex-direction: column; padding-left: 11px; }
.cellrow { display: flex; align-items: center; height: 23px; width: 90px; position: relative; top: -1px; }
.cellrow span { margin-left: 3px; letter-spacing: -.1px; }
.dim { color: #aaa; }
.near { margin-left: 1px; }
.far { margin-left: 13px; } .far2 { margin-left: 13px; }
.edit-tools { display: grid; grid-template-columns: 18px 14px; grid-template-rows: 23px 23px 23px; justify-items: center; align-items: center; padding-left: 10px; margin-top: -1px; height: 69px; }
.shift { margin-left: 13px; }
.sort { width: 38px; margin-left: 14px; } .find { width: 44px; margin-left: 3px; }
.g-add .big, .g-pdf .big { width: 100%; }
.collapse { margin: 78px 0 0 71px; }

/* formula bar */
.formula { height: 46px; flex: none; padding-top: 10px; display: flex; color: #444; font: 13px/24px Lato, sans-serif; }
.namebox { width: 101px; height: 26px; background: #fdfdfd; border: 1px solid #c6c6c6; border-left: 0; padding: 0 0 0 6px; position: relative; }
.namebox .tri { border-width: 4px 4px 0; right: 6px; }
.formula .grip { margin: 9px 0 0 14px; }
.fx-tools { margin-left: 13px; width: 110px; height: 26px; background: #fdfdfd; border: 1px solid #c6c6c6; display: grid; grid-template-columns: 36px 36px 36px; justify-items: center; align-items: center; }
.fx { font: italic bold 14.5px/20px "Liberation Serif", serif; color: #555; }
.fx sub { font-size: 10px; vertical-align: -1px; }
.fx-input { margin-left: 3px; width: 1111px; height: 26px; background: #fdfdfd; border: 1px solid #c6c6c6; padding: 0 4px 0 11px; display: flex; justify-content: space-between; align-items: center; line-height: 22px; letter-spacing: .3px; }

/* worksheet */
.work { height: 467px; flex: none; display: flex; }
.sheet { width: 1054px; overflow: hidden; border-right: 1px solid #999; font: 13.2px/19px Lato, sans-serif; }
.colhead { display: flex; height: 20px; background: #e6e6e6; border-bottom: 1px solid #9b9b9b; font: 12.5px/19px Lato, sans-serif; color: #222; width: 1054px; }
.colhead span { width: 64px; flex: none; border-right: 1px solid #b5b5b5; text-align: center; }
.colhead .w70 { width: 70px; }
.colhead .sel { background: #d2d2d2; color: #217346; }
.corner { width: 20px; border-right: 1px solid #b5b5b5; background: linear-gradient(135deg, transparent 0 50%, #b5b5b5 50%) 5px 5px / 11px 11px no-repeat; }
.gridarea { display: flex; height: 447px; overflow: hidden; }
.rowhead { width: 20px; flex: none; background: #e6e6e6; border-right: 1px solid #9b9b9b; font-size: 12.5px; color: #222; }
.rowhead span { display: block; height: 20px; border-bottom: 1px solid #b5b5b5; line-height: 21px; padding-right: 5px; text-align: right; margin-left: -4px; }
.rowhead span:nth-child(-n+9) { padding-right: 9px; }
.rowhead .sel { background: #d2d2d2; color: #217346; }
.cells { width: 1034px; flex: none; position: relative; background:
  linear-gradient(#d4d4d4, #d4d4d4) 63px 0 / 1px 100% no-repeat, linear-gradient(#d4d4d4, #d4d4d4) 127px 0 / 1px 100% no-repeat, linear-gradient(#d4d4d4, #d4d4d4) 191px 0 / 1px 100% no-repeat,
  repeating-linear-gradient(90deg, transparent 0 63px, #d4d4d4 63px 64px) 262px 0 / 768px 100% no-repeat, linear-gradient(#d4d4d4, #d4d4d4) 261px 0 / 1px 100% no-repeat,
  repeating-linear-gradient(transparent 0 19px, #d4d4d4 19px 20px), #fff; }
table { width: 518px; table-layout: fixed; border-spacing: 0; color: #111; }
col { width: 64px; } .wide { width: 70px; }
th, td { padding: 2px 2px 0; height: 20px; line-height: 17px; border-right: 1px solid #111; border-bottom: 1px solid #111; text-align: left; white-space: nowrap; overflow: hidden; }
th { background: #000; color: #fff; padding-top: 0; letter-spacing: .2px; }
th div { height: 19px; line-height: 21px; overflow: hidden; margin-right: -2px; position: relative; }
th i { width: 17px; height: 17px; border: 1px solid #9aa4b0; background: linear-gradient(#fff, #e6e9ee); position: absolute; right: 1px; top: 1px; }
th i::after { content: ""; position: absolute; left: 3.5px; top: 5px; border: 4px solid transparent; border-top: 5px solid #666; border-bottom: 0; }
th.pink { background: #ffc7ce; color: #9c0006; }
tbody tr:nth-child(odd) td { background: #d9d9d9; }
td:nth-child(2), td:nth-child(4), td:nth-child(7) { letter-spacing: .45px; }
td:nth-child(1), td:nth-child(3), td:nth-child(5), td:nth-child(6), td:nth-child(8) { text-align: right; }
td svg { width: 16px; height: 16px; float: left; margin: 0 0 0 -1px; }
.last td { border-bottom-width: 2px; padding-top: 1px; }
.last td svg { margin-top: 1px; }
tbody td.p30 { background: #ffe984; } tbody td.p5 { background: #63be7b; } tbody td.p10 { background: #84c77c; }
tbody tr:nth-child(odd) td.p50 { background: #ffe082; } tbody tr:nth-child(odd) td.p5 { background: #63be7b; } tbody tr:nth-child(odd) td.p120 { background: #fdc57d; }
tbody tr:nth-child(odd) td.p65 { background: #ffdb81; } tbody tr:nth-child(odd) td.p40 { background: #ffe583; } tbody tr:nth-child(odd) td.p340 { background: #f8696b; }
.high { color: #9c0006; }
tbody.plain tr td { background: none; border-color: transparent; }
.plain td:nth-child(2) { text-align: left; } .plain td:nth-child(3) { text-align: right; }
.selection { position: absolute; left: -2px; top: -1px; width: 67px; height: 22px; border: 2px solid #217346; box-shadow: inset 0 0 0 1px #fff; }
.selection::after { content: ""; position: absolute; right: -4px; bottom: -4px; width: 5px; height: 5px; background: #217346; border: solid #fff; border-width: 1px 0 0 1px; box-sizing: content-box; }
.table-corner { position: absolute; left: 514px; top: 235px; border: 2px solid #3a4fa0; border-top-color: transparent; border-left-color: transparent; }
.chart { position: absolute; left: 539px; top: 152px; font-family: Lato, sans-serif; }
.ctitle { font-size: 18.5px; font-weight: bold; letter-spacing: 1.7px; fill: #f2f2f2; text-anchor: middle; text-shadow: 0 2px 3px rgba(0, 0, 0, .5); }
.axis { font-size: 10.8px; fill: #d9d9d9; text-anchor: end; }
.cats { font-size: 10.8px; letter-spacing: .1px; fill: #d9d9d9; text-anchor: middle; }

.vscroll { width: 15px; margin: 2px 0 0 3px; height: 466px; display: flex; flex-direction: column; background: #f1f1f1; }
.vscroll span, .hscroll span { width: 15px; height: 15px; border: 1px solid #999; background: #fff; display: flex; align-items: center; justify-content: center; flex: none; }
.vscroll i { height: 383px; margin-bottom: 53px; border: 1px solid #999; background: #fff; }

/* side pane */
.pane { margin: 2px 0 0 3px; height: 492px; flex: none; width: 284px; border-left: 1px solid #bdbdbd; padding: 12px 0 0 13px; }
.pane-head { display: flex; align-items: flex-start; height: 34px; }
.pane-head h2 { font-size: 20.3px; font-weight: 300; line-height: 25px; margin: 0; width: 198px; color: #333; white-space: nowrap; }
.pane-head svg:nth-child(2) { margin-top: 5px; }
.pane-head svg:nth-child(3) { margin: 4px 0 0 28px; }
.pane-icons { display: flex; gap: 12px; padding-left: 3px; }
.pane-icons span { width: 30px; height: 30px; display: flex; align-items: center; justify-content: center; }
.pane-icons .on { background: #c6c6c6; }
.notch { margin-top: 7px; }
.fold { display: flex; align-items: center; gap: 6px; font-weight: 600; padding-left: 8px; margin-top: 5px; height: 18px; }
.fold.line { margin-top: 11px; margin-bottom: 10px; }
.opt { display: flex; align-items: center; height: 22px; padding-left: 22px; gap: 6px; color: #b1b1b1; font-size: 11.4px; }
.opt i { width: 12px; height: 12px; border: 1px solid #c6c6c6; border-radius: 50%; background: #efefef; margin-top: -4px; }
.opt u { text-underline-offset: 2px; }

/* sheet tabs */
.sheetbar { height: 28px; flex: none; display: flex; border-top: 1px solid #999; background: #e6e6e6; width: 1057px; }
.arrows { width: 95px; display: flex; gap: 24px; padding: 9px 0 0 21px; flex: none; border-right: 1px solid #999; height: 23px; }
.stab { width: 65px; font-size: 12px; line-height: 26px; text-align: center; height: 23px; color: #444; border-right: 1px solid #999; }
.stab:nth-child(2) { border-right: 0; width: 64px; }
.stab.current { height: 25px; background: #fff; color: #217346; font-weight: bold; border-bottom: 2px solid #217346; margin: -1px 0 0 0; width: 66px; border-left: 1px solid #999; font-size: 11.6px; line-height: 27px; letter-spacing: -.1px; }
.plus { margin: 5px 0 0 32px; }
.sheetbar .grip { margin: 8px 0 0 239px; }
.hscroll { width: 395px; height: 15px; margin: 6px 0 0 14px; display: flex; background: #f1f1f1; }
.hscroll i { width: 325px; border: 1px solid #999; background: #fff; margin-left: -1px; margin-right: 41px; }

/* status bar */
.status { height: 22px; flex: none; background: #f3f3f3; border-top: 1px solid #c6c6c6; display: flex; align-items: center; font-size: 11px; white-space: nowrap; }
.ready { width: 47px; padding-left: 5px; } .calc { width: 70px; padding-left: 5px; }
.acc { margin-left: 3px; width: 923px; font-size: 10.8px; letter-spacing: -.25px; margin-top: -1px; }
.views { display: flex; height: 21px; }
.views span { width: 40px; display: flex; align-items: center; justify-content: center; }
.views .on { background: #c6c6c6; }
.zoom { margin-left: 5px; overflow: visible; }
.pc { margin-left: 16px; font-size: 10.8px; }

/* taskbar */
.taskbar { height: 47px; flex: none; border-top: 1px solid #b9aab0; display: flex; background: linear-gradient(90deg, #e7d4d4, #ead3d6 25%, #e9d4e3 39%, #f1dae5 48%, #eed7e1 56%, #e8d3e0 62%, #ead3d6 72%, #e8d3d7); color: #222; }
.weather { width: 376px; display: flex; padding: 4px 0 0 13px; gap: 3px; font-size: 11px; }
.weather div { padding-top: 3px; } .weather span { color: #555; }
.weather text { font-size: 11px; fill: #fff; text-anchor: middle; }
.apps { display: flex; align-items: center; height: 46px; }
.search { width: 218px; height: 31px; border-radius: 16px; background: #f8f0f4; border: 1px solid #dcc7d0; margin: 0 13px 0 14px; display: flex; align-items: center; padding-left: 9px; gap: 9px; font-size: 12.5px; color: #555; }
.earth { margin-left: auto; margin-right: 1px; }
.apps .app { margin-right: 20px; }
.apps .win { margin-left: 1px; }
.running { width: 36px; height: 38px; background: #f6eaee; border-radius: 4px; box-shadow: 3px 0 0 -1px #e0cdd2; display: flex; align-items: center; justify-content: center; position: relative; margin-left: -7px; }
.running::after, .chrome::after { content: ""; position: absolute; bottom: 0; left: 10px; width: 16px; height: 3px; border-radius: 2px; background: #0078d4; }
.chrome { margin-left: 14px; position: relative; margin-top: -6px; }
.chrome::after { width: 6px; background: #888; bottom: -7px; }
.tray { display: flex; align-items: center; height: 46px; margin-left: auto; padding-right: 17px; font-size: 11.3px; white-space: nowrap; }
.sync { margin-left: 17px; } .cloud { margin-left: 15px; }
.lang { width: 40px; margin-left: 9px; text-align: center; }
.net { margin-left: 10px; } .vol { margin-left: 7px; }
.clock { width: 80px; text-align: right; font-size: 11.5px; letter-spacing: .25px; }
```
